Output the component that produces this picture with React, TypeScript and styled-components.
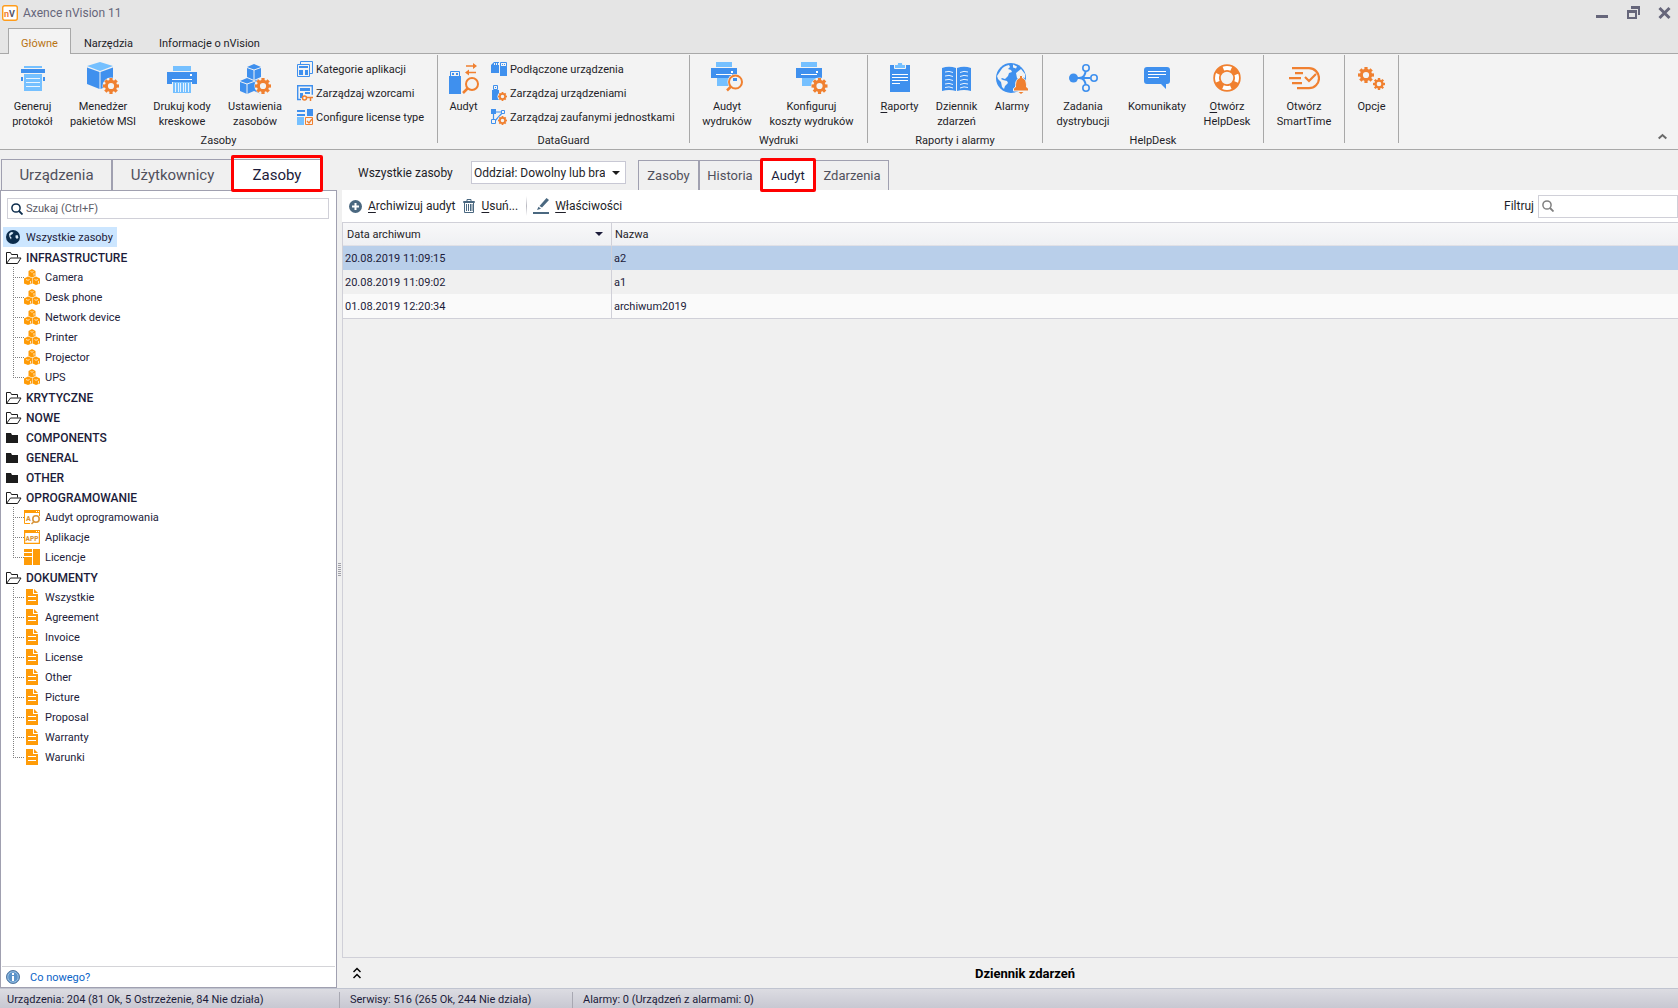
import React from "react";
import styled, { createGlobalStyle } from "styled-components";

const BLUE = "#3f90ee";
const SKY = "#75c0ff";
const ORANGE = "#f08030";
const AMBER = "#ff9c08";
const NAVY = "#1c1c3a";
const SLATE = "#4a6880";

const GlobalStyle = createGlobalStyle`
  * { box-sizing: border-box; }
  html, body { margin: 0; padding: 0; }
  body, button, input, select, table {
    font-family: Roboto, "Noto Sans", sans-serif;
    font-size: 11px;
    color: #1e1e28;
  }
  button { border: 0; padding: 0; background: none; cursor: pointer; }
  svg { display: block; flex: none; }
`;

/* ---------- icons ---------- */

type GearProps = { cx: number; cy: number; r: number; bg?: string; color?: string };

const Gear = ({ cx, cy, r, bg = "#f3f3f3", color = ORANGE }: GearProps) => (
  <g transform={`translate(${cx} ${cy})`}>
    <circle r={r + 0.5} fill={bg} />
    {[0, 45, 90, 135].map((a) => (
      <rect key={a} x={-r * 0.2} y={-r} width={r * 0.4} height={r * 2} fill={color} transform={`rotate(${a})`} />
    ))}
    <circle r={r * 0.58} fill={bg} stroke={color} strokeWidth={r * 0.38} />
  </g>
);

const Big = ({ children }: { children: React.ReactNode }) => (
  <svg width="32" height="36" viewBox="0 0 32 36" aria-hidden="true">{children}</svg>
);

const Small = ({ children }: { children: React.ReactNode }) => (
  <svg width="16" height="16" viewBox="0 0 16 16" aria-hidden="true">{children}</svg>
);

const ProtocolIcon = () => (
  <Big>
    <path fill={SKY} d="M7 6h18v2H7z" />
    <path fill={BLUE} d="M4 9h24v4H4zM4 17h24v4H4z" />
    <path fill="#f3f3f3" d="M6 14h20v8H6z" />
    <path fill={SKY} d="M7 14h18v17H7z" />
    <path stroke="#eaf5ff" d="M9 18.500h14M9 22.500h14M9 26.500h14" />
  </Big>
);

const PackageIcon = () => (
  <Big>
    <path fill={SKY} d="M0 6 13 2l13 4-13 5z" />
    <path fill={BLUE} d="M0 7.500 12.500 12v17L0 24zM26 7.500 13.500 12v17L26 24z" />
    <Gear cx={24} cy={26} r={8} />
  </Big>
);

const BarcodePrinterIcon = () => (
  <Big>
    <path fill={SKY} d="M7 6h18v5H7z" />
    <path fill={BLUE} d="M1 12h30v12H1z" />
    <path fill="#fff" d="M24 14h2v2h-2zM6 19h20v1H6z" />
    <path fill="#f3f3f3" d="M6 22h20v3H6z" />
    <path fill={SKY} d="M7 22h18v11H7z" />
    <path stroke="#e4f2ff" d="M9.500 23v9M12.500 23v9M14.500 23v9M17.500 23v9M19.500 23v9M22.500 23v9" />
  </Big>
);

const Cube = ({ x, y }: { x: number; y: number }) => (
  <g transform={`translate(${x} ${y})`}>
    <path fill={BLUE} d="m0 3 7-3 7 3v10l-7 3-7-3z" />
    <path fill="none" stroke="#f3f3f3" d="m0 3.500 7 2.500 7-2.500M7 6v10" />
  </g>
);

const AssetSettingsIcon = () => (
  <Big>
    <Cube x={8} y={4} />
    <Cube x={1} y={18} />
    <Cube x={15} y={18} />
    <Gear cx={24} cy={26} r={8} />
  </Big>
);

const UsbAuditIcon = () => (
  <Big>
    <path fill={BLUE} d="M1 16h12v18H1z" />
    <path fill="none" stroke={BLUE} d="M2.500 16v-4.500h9V16" />
    <path fill={BLUE} d="M4 13h2v2H4zM8 13h2v2H8z" />
    <path stroke={ORANGE} strokeWidth="1.500" d="M18 6h8M20 12.500h8" />
    <path fill={ORANGE} d="m25 3 4 3-4 3zM21 9.500l-4 3 4 3z" />
    <circle cx="24" cy="24" r="6" fill="none" stroke={ORANGE} strokeWidth="2" />
    <path stroke={ORANGE} strokeWidth="2.500" d="m20 28-5 5" />
  </Big>
);

const PrinterBody = () => (
  <>
    <path fill={SKY} d="M5 2h16v5H5z" />
    <path fill={BLUE} d="M0 8h26v10H0z" />
    <path fill="#fff" d="M20 11h2v2h-2zM5 14h16v1H5z" />
    <path fill={SKY} d="M6 18h14v8H6z" />
  </>
);

const PrintAuditIcon = () => (
  <Big>
    <PrinterBody />
    <circle cx="24.500" cy="22" r="8" fill="#f3f3f3" />
    <circle cx="24.500" cy="22" r="6.500" fill="#f3f3f3" stroke={ORANGE} strokeWidth="2" />
    <path fill={BLUE} d="M22 18h4v3h-4z" />
    <path stroke={ORANGE} strokeWidth="2.500" d="m20 26.500-4 4" />
  </Big>
);

const PrintCostIcon = () => (
  <Big>
    <PrinterBody />
    <Gear cx={23.5} cy={26} r={8} />
  </Big>
);

const ReportIcon = () => (
  <Big>
    <path fill={BLUE} d="M6 5h20v27H6z" />
    <path fill={SKY} stroke="#f3f3f3" d="M10.500 8.500v-4h3v-2h5v2h3v4z" />
    <path stroke="#fff" d="M8 14.500h16M8 17.500h16M8 20.500h16M8 23.500h8" />
  </Big>
);

const BookIcon = () => (
  <Big>
    <path fill={BLUE} d="M1 8q7-2.500 14 0v23q-7-2-14 0zM30 8q-7-2.500-14 0v23q7-2 14 0z" />
    <path
      fill="none"
      stroke="#e8f3ff"
      d="M4 12q4-1.500 8 .5M4 16q4-1.500 8 .5M4 20q4-1.500 8 .5M4 24q4-1.500 8 .5M4 27.500q4-1.500 8 .5M19 12.500q4-2 8-.5M19 16.500q4-2 8-.5M19 20.500q4-2 8-.5M19 24.500q4-2 8-.5M19 28q4-2 8-.5"
    />
  </Big>
);

const AlarmIcon = () => (
  <Big>
    <circle cx="15" cy="18" r="15" fill={BLUE} />
    <path fill="#f3f3f3" d="M5 10c2-3 4-4 8-5l1 2-2 2 3 1 1 2-3 1-1 3-3 3-3-1-1 1 2 1 4 1 1 2-3 3-1 3-2-2-1-5-3-3-1-3zM17 4.500l4 2-1 2-3-1zM20 13l5-4 4 5v4l-4-1-1 3-3-2z" />
    <path fill={ORANGE} stroke="#f3f3f3" d="M23.500 15.500h3V18c4 1 4 6 4 9l2 1.500V31h-15v-2.500l2-1.500c0-3 0-8 4-9z" />
    <path fill={ORANGE} d="M22.500 32h5L25 34z" />
  </Big>
);

const DistributionIcon = () => (
  <Big>
    <path fill="none" stroke={BLUE} strokeWidth="2" d="M6 18h17M12 18c5 0 6-3 7-8M12 18c5 0 6 3 7 8" />
    <circle cx="6.500" cy="18" r="4.500" fill={BLUE} />
    <g fill="#f3f3f3" stroke={BLUE} strokeWidth="1.600">
      <circle cx="19" cy="8" r="3.200" />
      <circle cx="27" cy="18" r="3.200" />
      <circle cx="19" cy="28" r="3.200" />
    </g>
  </Big>
);

const MessageIcon = () => (
  <Big>
    <path fill={BLUE} d="M6 7h20q3 0 3 3v11q0 3-3 3h-1v5l-5-5H6q-3 0-3-3V10q0-3 3-3z" />
    <path stroke="#fff" d="M7 11.500h18M7 14.500h18M7 17.500h11" />
  </Big>
);

const LifebuoyIcon = () => (
  <Big>
    <circle cx="16" cy="18" r="10" fill="none" stroke={ORANGE} strokeWidth="7.500" />
    <circle cx="16" cy="18" r="10" fill="none" stroke="#fff" strokeWidth="4" strokeDasharray="8 7.708" strokeDashoffset="4" />
  </Big>
);

const SmartTimeIcon = () => (
  <Big>
    <g fill="none" stroke={ORANGE} strokeWidth="2.200">
      <path d="M4 8.200h17a10 10 0 0 1 0 20H9" />
      <path d="M7 13.200h8M1 18.200h12M4 23.200h10" />
      <path d="m17 17 4 4 7-7" />
    </g>
  </Big>
);

const OptionsIcon = () => (
  <Big>
    <Gear cx={10} cy={15} r={8} />
    <Gear cx={23} cy={24} r={6} />
  </Big>
);

const CategoriesIcon = () => (
  <Small>
    <path fill="none" stroke={BLUE} d="M3.500 3V.5h12v12H13M.5 3.500h12v12H.5z" />
    <path fill={BLUE} d="M2 5h9v2H2zM2 9h4v5H2zM8 9h3v5H8z" />
  </Small>
);

const TemplatesIcon = () => (
  <Small>
    <path fill="none" stroke={BLUE} strokeWidth="1.400" d="M4 14.500H.7V.7h14.600v9" />
    <path fill={BLUE} d="M3 3h10v3H3zM3 8h3v5H3zM8 7h5v2H8z" />
    <circle cx="7.500" cy="13" r="2" fill="none" stroke={ORANGE} strokeWidth="1.500" />
    <path fill="none" stroke={ORANGE} strokeWidth="1.500" d="M9.500 12.500H16M13.500 13v3" />
  </Small>
);

const LicenseTypeIcon = () => (
  <Small>
    <path fill={BLUE} d="M0 1h8v2H0zM0 5h8v2H0zM10 0h6v7h-6z" />
    <path fill={SKY} d="M0 8h7v8H0z" />
    <path fill="none" stroke={ORANGE} d="M8.500 8.500h7v7h-7z" />
    <path fill="none" stroke={ORANGE} strokeWidth="1.300" d="m10 12 2 2 3-4" />
  </Small>
);

const ConnectedIcon = () => (
  <Small>
    <path fill={BLUE} d="M0 4l3-3h5v11H0zM9 5h7v10H9z" />
    <path stroke="#f3f3f3" d="M3.500 2v2M5.500 2v2M7.500 2v2" />
    <path fill="#f3f3f3" stroke={BLUE} d="M9.500 1.500h6v4h-6z" />
    <path fill={BLUE} d="M11 3h1v1h-1zM13 3h1v1h-1z" />
  </Small>
);

const ManageDeviceIcon = () => (
  <Small>
    <path fill={BLUE} d="M1 5h7v10H1z" />
    <path fill="#f3f3f3" stroke={BLUE} d="M2.500.5h4v4h-4z" />
    <path fill={BLUE} d="M4 2h1v1H4z" />
    <Gear cx={11.5} cy={11.5} r={4.5} />
  </Small>
);

const TrustedIcon = () => (
  <Small>
    <path fill="none" stroke={BLUE} strokeWidth="1.200" d="M2.500 3v9M3 3h9M3 13l9-10" />
    <path fill={BLUE} d="M0 0h5v5H0z" />
    <path fill="#f3f3f3" stroke={BLUE} d="M10.500 1.500h3v3h-3zM.5 10.500h4v4h-4z" />
    <Gear cx={11.5} cy={11.5} r={4.5} />
  </Small>
);

const GlobeIcon = () => (
  <svg width="14" height="14" viewBox="0 0 14 14" aria-hidden="true">
    <circle cx="7" cy="7" r="7" fill="#0c2c4c" />
    <path fill="#dcecfa" d="M3 4 5 2l2.500.5-1 1.500L5 5 4 6l1.500 1.500L5 9.500 3.500 7zM9.500 5.500l2-.5 1 2.500L11 9 9.500 7.500z" />
  </svg>
);

const FolderOpenIcon = () => (
  <svg width="16" height="12" viewBox="0 0 16 12" aria-hidden="true">
    <path fill="none" stroke="#1c1c1c" d="M.5 11.500V.5h4l1 2h6v3M.5 11.500l4-5.500h10.500l-3.500 5.500z" />
  </svg>
);

const FolderIcon = () => (
  <svg width="16" height="12" viewBox="0 0 16 12" aria-hidden="true">
    <path fill="#1c1c1c" d="M0 1h5l1 2h6v8H0z" />
  </svg>
);

const CubesIcon = () => (
  <Small>
    <path
      fill={AMBER}
      d="m4.500 2 3.500-2 3.500 2v5l-3.500 1.500L4.500 7zM0 9.500 4 7.500l4 1.500v5.500L4 16l-4-1.500zM8.500 9 12 7.500l4 2v5L12 16l-3.500-1.500z"
    />
    <path fill="none" stroke="#fff" strokeWidth=".7" d="m6.500 2.500 1.500.7 1.500-.7M10 4v2.500M2 10.500l2 .8 1.500-.8M6.500 12v2.500M10.500 10.500l1.500.8 2-.8M14.500 12v2.500" />
  </Small>
);

const SoftAuditIcon = () => (
  <Small>
    <path fill={AMBER} d="M0 1h16v3H0z" />
    <path fill="#fff" d="M12 2h1v1h-1zM14 2h1v1h-1z" />
    <path fill="none" stroke={AMBER} d="M.5 4v10.500H6M15.500 4v3" />
    <text x="4.500" y="12" textAnchor="middle" fontSize="7" fontWeight="900" fill="#d9963c">A</text>
    <circle cx="12" cy="10" r="3.200" fill="#fff" stroke="#d9963c" strokeWidth="1.600" />
    <path stroke="#d9963c" strokeWidth="1.600" d="m10 12.500-2.500 2.500" />
  </Small>
);

const AppIcon = () => (
  <Small>
    <path fill="none" stroke={AMBER} strokeWidth="1.200" d="M.6 1.600h14.800v12.800H.6z" />
    <path fill={AMBER} d="M0 1h16v3H0z" />
    <path fill="#fff" d="M12 2h1v1h-1zM14 2h1v1h-1z" />
    <text x="8" y="12" textAnchor="middle" fontSize="6.500" fontWeight="900" fill="#d9963c">APP</text>
  </Small>
);

const LicensesIcon = () => (
  <Small>
    <path fill={AMBER} d="M0 0h8v3H0zM0 4h8v3H0zM0 8h8v8H0zM9 0h7v16H9z" />
  </Small>
);

const DocIcon = () => (
  <Small>
    <path fill={AMBER} d="M2 0h7v5h5v11H2zM10 0l4 4h-4z" />
    <path stroke="#fff" d="M4 7.500h8M4 11.500h8" />
  </Small>
);

const LogoIcon = () => (
  <svg width="16" height="16" viewBox="0 0 16 16" aria-hidden="true">
    <rect x=".7" y=".7" width="14.600" height="14.600" rx="2" fill="#fff" stroke="#ff9c1a" strokeWidth="1.400" />
    <text x="2" y="12" fontSize="9" fontWeight="700" fill={ORANGE}>n</text>
    <text x="7" y="12" fontSize="9" fontWeight="700" fill="#555566">V</text>
  </svg>
);

const SearchIcon = ({ color }: { color: string }) => (
  <svg width="12" height="12" viewBox="0 0 12 12" aria-hidden="true">
    <circle cx="5" cy="5" r="4.100" fill="none" stroke={color} strokeWidth="1.500" />
    <path stroke={color} strokeWidth="1.800" d="m8 8 3.500 3.500" />
  </svg>
);

const PlusIcon = () => (
  <svg width="13" height="13" viewBox="0 0 13 13" aria-hidden="true">
    <circle cx="6.500" cy="6.500" r="6.500" fill={SLATE} />
    <path stroke="#fff" strokeWidth="2" d="M6.500 3v7M3 6.500h7" />
  </svg>
);

const TrashIcon = () => (
  <svg width="12" height="14" viewBox="0 0 12 14" aria-hidden="true">
    <path fill="none" stroke={SLATE} d="M4 2V.5h4V2M.5 2.500h11v1H.5zM1.500 4v9.500h9V4M3.500 5v7M5.500 5v7M7.500 5v7M9 5v7" />
  </svg>
);

const PenIcon = () => (
  <svg width="16" height="16" viewBox="0 0 16 16" aria-hidden="true">
    <path fill={SLATE} d="M0 14h16v2H0zM13.500 0 16 2 9 9.500 6.500 8zM5.500 8.800 8 10.800 4 12z" />
  </svg>
);

const InfoIcon = () => (
  <svg width="14" height="14" viewBox="0 0 14 14" aria-hidden="true">
    <circle cx="7" cy="7" r="6.500" fill="#5b93c9" stroke="#5478a0" />
    <circle cx="7" cy="7" r="5.200" fill="none" stroke="#a9cbe8" strokeWidth=".8" />
    <path fill="#fff" d="M6 3h2v2H6zM6 6h2v5H6z" />
  </svg>
);

/* ---------- frame ---------- */

const Window = styled.div`
  display: flex;
  flex-direction: column;
  min-height: 100vh;
  background: #f0f0f0;
`;

const TitleBar = styled.header`
  display: flex;
  align-items: center;
  height: 25px;
  padding: 1px 7px 0 2px;
  background: #e5e5e5;
`;

const AppTitle = styled.h1`
  flex: 1;
  margin: 0 0 0 5px;
  font-size: 12px;
  font-weight: 400;
  color: #66667a;
`;

const WindowButtons = styled.div`
  display: flex;
  gap: 18px;
`;

const RibbonTabs = styled.nav`
  display: flex;
  height: 29px;
  padding: 3px 0 0 8px;
  background: #e5e5e5;
  border-bottom: 1px solid #a8a8a8;
`;

const RibbonTab = styled.button<{ $active?: boolean }>`
  height: 26px;
  padding: 4px 12px 0;
  border: 1px solid ${(p) => (p.$active ? "#a8a8a8" : "transparent")};
  border-bottom: 0;
  background: ${(p) => (p.$active ? "#f3f3f3" : "transparent")};
  color: ${(p) => (p.$active ? "#b87414" : "#1e1e28")};
`;

const Ribbon = styled.div`
  display: flex;
  height: 96px;
  padding-top: 1px;
  background: #f3f3f3;
  border-bottom: 1px solid #a8a8a8;
`;

const Group = styled.section`
  display: flex;
  flex-direction: column;
  height: 88px;
  padding: 0 4px;
  border-right: 1px solid #a8a8a8;
`;

const GroupBody = styled.div`
  display: flex;
  flex: 1;
`;

const GroupTitle = styled.h2`
  margin: 0 0 -5px;
  font-size: 11px;
  font-weight: 400;
  line-height: 15px;
  text-align: center;
`;

const BigButton = styled.button<{ $width: number }>`
  display: flex;
  flex-direction: column;
  align-items: center;
  width: ${(p) => p.$width}px;
  padding-top: 5px;
  line-height: 15px;
  white-space: nowrap;
`;

const BigLabel = styled.span`
  margin-top: 3px;
  text-align: center;
`;

const SmallList = styled.div<{ $width: number }>`
  width: ${(p) => p.$width}px;
  padding: 2px 0 0 6px;
`;

const SmallButton = styled.button`
  display: flex;
  align-items: center;
  gap: 3px;
  height: 24px;
  white-space: nowrap;
`;

const CollapseButton = styled.button`
  margin: auto 11px 6px auto;
`;

const Key = styled.u`
  text-underline-offset: 2px;
`;

const Main = styled.main`
  display: flex;
  flex: 1;
`;

/* ---------- left side ---------- */

const Side = styled.aside`
  display: flex;
  flex-direction: column;
  width: 337px;
  padding-top: 9px;
`;

const SideTabs = styled.div`
  display: flex;
  height: 31px;
  padding-left: 1px;
`;

const Tab = styled.button<{ $width: number; $active?: boolean; $large?: boolean }>`
  position: relative;
  width: ${(p) => p.$width}px;
  border: 1px solid #a0a0b0;
  border-bottom: 0;
  font-size: ${(p) => (p.$large ? 15 : 13)}px;
  background: ${(p) => (p.$active ? "#fff" : "#f0f0f0")};
  color: ${(p) => (p.$active ? NAVY : "#50505c")};

  &::after {
    content: "";
    display: ${(p) => (p.$active ? "block" : "none")};
    position: absolute;
    z-index: 1;
    inset: ${(p) => (p.$large ? "-5px -3px -2px" : "-3px -2px -2px")};
    border: 3px solid #ff0000;
    border-radius: 2px;
  }
`;

const SidePanel = styled.div`
  display: flex;
  flex: 1;
  flex-direction: column;
  padding: 7px 1px 0;
  background: #fff;
  border: 1px solid #a0a0b0;
`;

const SearchBox = styled.label`
  display: flex;
  align-items: center;
  gap: 3px;
  padding: 0 3px;
  background: #fff;
  border: 1px solid #d0d0d8;
`;

const SideSearch = styled(SearchBox)`
  height: 21px;
  margin: 0 6px 8px 5px;
`;

const BareInput = styled.input`
  flex: 1;
  min-width: 0;
  border: 0;
  padding: 0;
  outline: 0;
  background: none;
  &::placeholder { color: #5c5c68; opacity: 1; }
`;

const Tree = styled.ul`
  flex: 1;
  margin: 0;
  padding: 0 0 0 1px;
  list-style: none;
`;

const Branch = styled.ul`
  margin: 0 0 0 10px;
  padding: 0;
  list-style: none;
`;

const Node = styled.button<{ $bold?: boolean; $selected?: boolean }>`
  display: flex;
  align-items: center;
  gap: ${(p) => (p.$bold ? 4 : p.$selected ? 6 : 5)}px;
  height: 20px;
  padding: ${(p) => (p.$bold ? 2 : 0)}px 4px 0 3px;
  font-size: ${(p) => (p.$bold ? 12 : 11)}px;
  font-weight: ${(p) => (p.$bold ? 500 : 400)};
  color: ${NAVY};
  background: ${(p) => (p.$selected ? "#cce6ff" : "none")};
`;

const Leaf = styled.li`
  display: flex;
  padding-left: 8px;
  background-image:
    repeating-linear-gradient(#808080 0 1px, transparent 1px 2px),
    repeating-linear-gradient(90deg, #808080 0 1px, transparent 1px 2px);
  background-position: 0 0, 0 10px;
  background-size: 1px 100%, 11px 1px;
  background-repeat: no-repeat;

  &:last-child { background-size: 1px 10px, 11px 1px; }
`;

const SideFooter = styled.div`
  display: flex;
  align-items: center;
  gap: 10px;
  height: 21px;
  padding-left: 4px;
  border-top: 1px solid #d4d4d8;
`;

const NewsLink = styled.a`
  font-size: 11px;
  color: #0a64c8;
  text-decoration: none;
`;

const Splitter = styled.div`
  display: flex;
  align-items: center;
  justify-content: center;
  width: 5px;

  &::after {
    content: "";
    width: 3px;
    height: 13px;
    background: repeating-linear-gradient(#a0a0a8 0 1px, transparent 1px 2px);
  }
`;

/* ---------- right side ---------- */

const Content = styled.section`
  display: flex;
  flex: 1;
  flex-direction: column;
  min-width: 0;
`;

const ContentHeader = styled.div`
  display: flex;
  height: 40px;
  padding-left: 16px;
`;

const ContentLabel = styled.label`
  align-self: center;
  width: 113px;
  padding-top: 6px;
  font-size: 12px;
  line-height: 15px;
`;

const SelectBox = styled.span`
  position: relative;
  width: 155px;
  height: 23px;
  margin: 11px 12px 0 0;

  &::after {
    content: "";
    position: absolute;
    top: 10px;
    right: 6px;
    border: 4px solid transparent;
    border-top-color: #1c1c1c;
    border-bottom: 0;
    pointer-events: none;
  }
`;

const Select = styled.select`
  appearance: none;
  width: 100%;
  height: 100%;
  padding: 0 20px 0 2px;
  border: 1px solid #c8c8d4;
  border-radius: 0;
  background: #fff;
  font-size: 12px;
  color: #1e1e28;
`;

const ContentTabs = styled.div`
  display: flex;
  margin-top: 10px;
`;

const Toolbar = styled.div`
  display: flex;
  align-items: center;
  height: 32px;
  padding-left: 7px;
  background: #fff;
`;

const ToolButton = styled.button`
  display: flex;
  align-items: center;
  gap: 6px;
  margin-right: 8px;
  font-size: 12px;
`;

const ToolDivider = styled.span`
  width: 1px;
  height: 20px;
  margin-right: 6px;
  background: linear-gradient(#fff, #b8b8c0, #fff);
`;

const FilterLabel = styled.label`
  margin: 0 4px 0 auto;
  font-size: 12px;
`;

const FilterBox = styled(SearchBox)`
  width: 140px;
  height: 23px;
`;

const GridArea = styled.div`
  flex: 1;
  border-left: 1px solid #d0d0d8;
  border-bottom: 1px solid #d0d0d8;
`;

const DataTable = styled.table`
  width: 100%;
  border-collapse: separate;
  border-spacing: 0;
  border-top: 1px solid #d0d0d8;
  border-bottom: 1px solid #d0d0d8;
`;

const HeadCell = styled.th<{ $first?: boolean }>`
  width: ${(p) => (p.$first ? "269px" : "auto")};
  height: 23px;
  padding: 0 8px 0 ${(p) => (p.$first ? 4 : 3)}px;
  border-right: ${(p) => (p.$first ? "1px solid #d0d0d8" : "0")};
  border-bottom: 1px solid #e0e0e6;
  background: linear-gradient(#f8f8f9, #eff0f3);
  font-weight: 400;
  text-align: left;
`;

const HeadInner = styled.span`
  display: flex;
  align-items: center;
  justify-content: space-between;
`;

const SortMark = styled.span`
  border: 4px solid transparent;
  border-top-color: ${NAVY};
  border-bottom: 0;
`;

const Row = styled.tr<{ $tone: string }>`
  background: ${(p) => p.$tone};
`;

const Cell = styled.td`
  height: 24px;
  padding: 0 2px;
  color: ${NAVY};
  &:first-child { border-right: 1px solid #d0d0d8; }
`;

const LogBar = styled.div`
  display: grid;
  grid-template-columns: 30px 1fr;
  align-items: center;
  height: 30px;
`;

const LogButton = styled.button`
  display: flex;
  justify-content: flex-end;
  padding-right: 11px;
`;

const LogTitle = styled.h2`
  margin: 0;
  font-size: 13px;
  font-weight: 700;
  text-align: center;
  color: #000;
`;

const StatusBar = styled.footer`
  display: flex;
  align-items: center;
  height: 20px;
  padding-top: 3px;
  border-top: 1px solid #c0c4d0;
  background: linear-gradient(#dcdce2, #c8c8d2);
`;

const StatusItem = styled.span<{ $width?: number }>`
  width: ${(p) => (p.$width ? p.$width + "px" : "auto")};
  padding-left: ${(p) => (p.$width === 340 ? 7 : 10)}px;
  border-right: ${(p) => (p.$width ? "1px solid #a8a8b2" : "0")};
  line-height: 16px;
  color: ${NAVY};
`;

/* ---------- data ---------- */

const lines = (items: string[]) =>
  items.map((t, i) => (
    <React.Fragment key={t}>
      {i > 0 && <br />}
      {t}
    </React.Fragment>
  ));

type CommandProps = { width: number; icon: React.ReactNode; children: React.ReactNode };

const Command = ({ width, icon, children }: CommandProps) => (
  <BigButton type="button" $width={width}>
    {icon}
    <BigLabel>{children}</BigLabel>
  </BigButton>
);

const SmallCommand = ({ icon, label }: { icon: React.ReactNode; label: string }) => (
  <SmallButton type="button">
    {icon}
    {label}
  </SmallButton>
);

const RibbonGroup = ({ title, children }: { title?: string; children: React.ReactNode }) => (
  <Group>
    <GroupBody>{children}</GroupBody>
    {title && <GroupTitle>{title}</GroupTitle>}
  </Group>
);

type TreeGroup = { name: string; closed?: boolean; items?: { name: string; icon: React.ReactNode }[] };

const withIcon = (icon: React.ReactNode, names: string[]) => names.map((name) => ({ name, icon }));

const tree: TreeGroup[] = [
  {
    name: "INFRASTRUCTURE",
    items: withIcon(<CubesIcon />, ["Camera", "Desk phone", "Network device", "Printer", "Projector", "UPS"]),
  },
  { name: "KRYTYCZNE" },
  { name: "NOWE" },
  { name: "COMPONENTS", closed: true },
  { name: "GENERAL", closed: true },
  { name: "OTHER", closed: true },
  {
    name: "OPROGRAMOWANIE",
    items: [
      { name: "Audyt oprogramowania", icon: <SoftAuditIcon /> },
      { name: "Aplikacje", icon: <AppIcon /> },
      { name: "Licencje", icon: <LicensesIcon /> },
    ],
  },
  {
    name: "DOKUMENTY",
    items: withIcon(<DocIcon />, [
      "Wszystkie", "Agreement", "Invoice", "License", "Other", "Picture", "Proposal", "Warranty", "Warunki",
    ]),
  },
];

const archives = [
  { date: "20.08.2019 11:09:15", name: "a2", tone: "#b9cfea" },
  { date: "20.08.2019 11:09:02", name: "a1", tone: "#f0f0f0" },
  { date: "01.08.2019 12:20:34", name: "archiwum2019", tone: "#fafafa" },
];

export default function App() {
  return (
    <Window>
      <GlobalStyle />
      <TitleBar>
        <LogoIcon />
        <AppTitle>Axence nVision 11</AppTitle>
        <WindowButtons>
          <button type="button" aria-label="Minimalizuj">
            <svg width="13" height="14" viewBox="0 0 13 14"><path fill="#66667a" d="M0 9h12v3H0z" /></svg>
          </button>
          <button type="button" aria-label="Przywróć">
            <svg width="13" height="14" viewBox="0 0 13 14">
              <path fill="none" stroke="#66667a" strokeWidth="2" d="M1 6v6h8V6z" />
              <path fill="#66667a" d="M0 4h10v3H0zM4 0h9v9h-2V3H4z" />
            </svg>
          </button>
          <button type="button" aria-label="Zamknij">
            <svg width="13" height="14" viewBox="0 0 13 14"><path stroke="#66667a" strokeWidth="3" d="m1.500 2 10 10M11.500 2l-10 10" /></svg>
          </button>
        </WindowButtons>
      </TitleBar>

      <RibbonTabs>
        <RibbonTab type="button" $active>Główne</RibbonTab>
        <RibbonTab type="button">Narzędzia</RibbonTab>
        <RibbonTab type="button">Informacje o nVision</RibbonTab>
      </RibbonTabs>

      <Ribbon>
        <RibbonGroup title="Zasoby">
          <Command width={57} icon={<ProtocolIcon />}>{lines(["Generuj", "protokół"])}</Command>
          <Command width={84} icon={<PackageIcon />}>{lines(["Menedżer", "pakietów MSI"])}</Command>
          <Command width={74} icon={<BarcodePrinterIcon />}>{lines(["Drukuj kody", "kreskowe"])}</Command>
          <Command width={72} icon={<AssetSettingsIcon />}>{lines(["Ustawienia", "zasobów"])}</Command>
          <SmallList $width={142}>
            <SmallCommand icon={<CategoriesIcon />} label="Kategorie aplikacji" />
            <SmallCommand icon={<TemplatesIcon />} label="Zarządzaj wzorcami" />
            <SmallCommand icon={<LicenseTypeIcon />} label="Configure license type" />
          </SmallList>
        </RibbonGroup>
        <RibbonGroup title="DataGuard">
          <Command width={43} icon={<UsbAuditIcon />}>Audyt</Command>
          <SmallList $width={200}>
            <SmallCommand icon={<ConnectedIcon />} label="Podłączone urządzenia" />
            <SmallCommand icon={<ManageDeviceIcon />} label="Zarządzaj urządzeniami" />
            <SmallCommand icon={<TrustedIcon />} label="Zarządzaj zaufanymi jednostkami" />
          </SmallList>
        </RibbonGroup>
        <RibbonGroup title="Wydruki">
          <Command width={66} icon={<PrintAuditIcon />}>{lines(["Audyt", "wydruków"])}</Command>
          <Command width={103} icon={<PrintCostIcon />}>{lines(["Konfiguruj", "koszty wydruków"])}</Command>
        </RibbonGroup>
        <RibbonGroup title="Raporty i alarmy">
          <Command width={55} icon={<ReportIcon />}><Key>R</Key>aporty</Command>
          <Command width={59} icon={<BookIcon />}>{lines(["Dziennik", "zdarzeń"])}</Command>
          <Command width={52} icon={<AlarmIcon />}>Alarmy</Command>
        </RibbonGroup>
        <RibbonGroup title="HelpDesk">
          <Command width={72} icon={<DistributionIcon />}>{lines(["Zadania", "dystrybucji"])}</Command>
          <Command width={76} icon={<MessageIcon />}>Komunikaty</Command>
          <Command width={64} icon={<LifebuoyIcon />}><Key>O</Key>twórz<br />HelpDesk</Command>
        </RibbonGroup>
        <RibbonGroup>
          <Command width={72} icon={<SmartTimeIcon />}>{lines(["Otwórz", "SmartTime"])}</Command>
        </RibbonGroup>
        <RibbonGroup>
          <Command width={45} icon={<OptionsIcon />}>Opcje</Command>
        </RibbonGroup>
        <CollapseButton type="button" aria-label="Zwiń wstążkę">
          <svg width="9" height="10" viewBox="0 0 9 10"><path fill="none" stroke="#6a6a6a" strokeWidth="2" d="M.7 5.500 4.500 2l3.800 3.500" /></svg>
        </CollapseButton>
      </Ribbon>

      <Main>
        <Side>
          <SideTabs>
            <Tab type="button" $large $width={111}>Urządzenia</Tab>
            <Tab type="button" $large $width={121}>Użytkownicy</Tab>
            <Tab type="button" $large $active $width={88}>Zasoby</Tab>
          </SideTabs>
          <SidePanel>
            <SideSearch>
              <SearchIcon color="#0c2c4c" />
              <BareInput type="text" placeholder="Szukaj (Ctrl+F)" aria-label="Szukaj" />
            </SideSearch>
            <Tree>
              <li>
                <Node type="button" $selected><GlobeIcon />Wszystkie zasoby</Node>
              </li>
              {tree.map((g) => (
                <li key={g.name}>
                  <Node type="button" $bold>
                    {g.closed ? <FolderIcon /> : <FolderOpenIcon />}
                    {g.name}
                  </Node>
                  {g.items && (
                    <Branch>
                      {g.items.map((item) => (
                        <Leaf key={item.name}>
                          <Node type="button">{item.icon}{item.name}</Node>
                        </Leaf>
                      ))}
                    </Branch>
                  )}
                </li>
              ))}
            </Tree>
            <SideFooter>
              <InfoIcon />
              <NewsLink href="#nowosci">Co nowego?</NewsLink>
            </SideFooter>
          </SidePanel>
        </Side>
        <Splitter />
        <Content>
          <ContentHeader>
            <ContentLabel htmlFor="branch">Wszystkie zasoby</ContentLabel>
            <SelectBox>
              <Select id="branch">
                <option>Oddział: Dowolny lub brak</option>
              </Select>
            </SelectBox>
            <ContentTabs>
              <Tab type="button" $width={61}>Zasoby</Tab>
              <Tab type="button" $width={62}>Historia</Tab>
              <Tab type="button" $active $width={54}>Audyt</Tab>
              <Tab type="button" $width={74}>Zdarzenia</Tab>
            </ContentTabs>
          </ContentHeader>
          <Toolbar>
            <ToolButton type="button"><PlusIcon /><span><Key>A</Key>rchiwizuj audyt</span></ToolButton>
            <ToolButton type="button"><TrashIcon /><span><Key>U</Key>suń...</span></ToolButton>
            <ToolDivider />
            <ToolButton type="button"><PenIcon /><span><Key>W</Key>łaściwości</span></ToolButton>
            <FilterLabel htmlFor="filter">Filtruj</FilterLabel>
            <FilterBox>
              <SearchIcon color="#808080" />
              <BareInput id="filter" type="text" />
            </FilterBox>
          </Toolbar>
          <GridArea>
            <DataTable>
              <thead>
                <tr>
                  <HeadCell $first><HeadInner>Data archiwum<SortMark /></HeadInner></HeadCell>
                  <HeadCell>Nazwa</HeadCell>
                </tr>
              </thead>
              <tbody>
                {archives.map((a) => (
                  <Row key={a.name} $tone={a.tone}>
                    <Cell>{a.date}</Cell>
                    <Cell>{a.name}</Cell>
                  </Row>
                ))}
              </tbody>
            </DataTable>
          </GridArea>
          <LogBar>
            <LogButton type="button" aria-label="Rozwiń dziennik">
              <svg width="8" height="12" viewBox="0 0 8 12"><path fill="none" stroke="#000" strokeWidth="1.500" d="M.5 5 4 1.500 7.500 5M.5 11 4 7.500 7.500 11" /></svg>
            </LogButton>
            <LogTitle>Dziennik zdarzeń</LogTitle>
          </LogBar>
        </Content>
      </Main>

      <StatusBar>
        <StatusItem $width={340}>Urządzenia: 204 (81 Ok, 5 Ostrzeżenie, 84 Nie działa)</StatusItem>
        <StatusItem $width={233}>Serwisy: 516 (265 Ok, 244 Nie działa)</StatusItem>
        <StatusItem>Alarmy: 0 (Urządzeń z alarmami: 0)</StatusItem>
      </StatusBar>
    </Window>
  );
}
